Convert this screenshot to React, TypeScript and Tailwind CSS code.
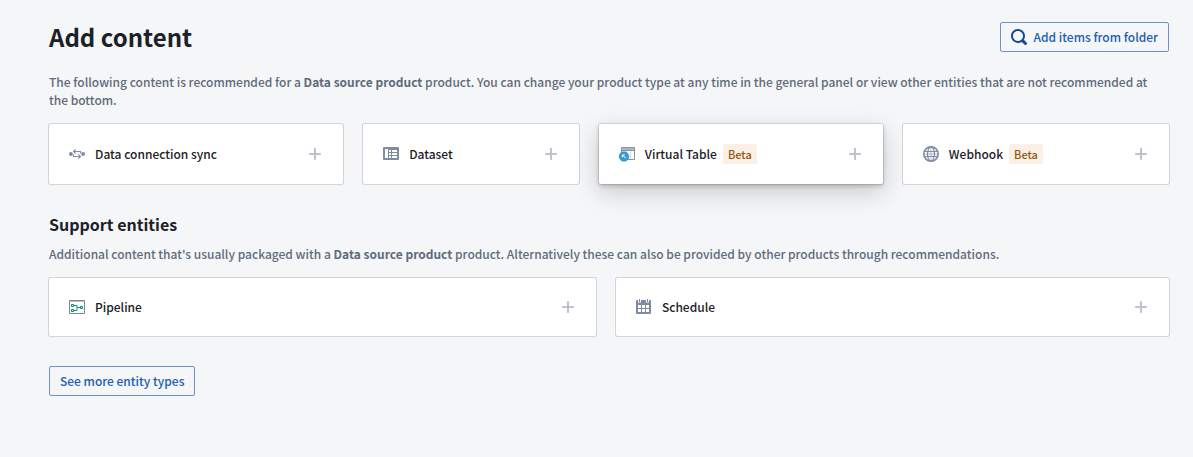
import type { ReactNode } from "react"

type Entity = {
  name: string
  icon: ReactNode
  beta?: boolean
  raised?: boolean
}

function SearchIcon() {
  return (
    <svg className="size-4 shrink-0" viewBox="0 0 16 16" fill="#184a90" aria-hidden="true">
      <path d="M15.55 13.43l-2.67-2.68a6.94 6.94 0 001.11-3.76c0-3.87-3.13-7-7-7s-7 3.13-7 7 3.13 7 7 7c1.39 0 2.68-.42 3.76-1.11l2.68 2.67a1.498 1.498 0 102.12-2.12zm-8.56-1.44c-2.76 0-5-2.24-5-5s2.24-5 5-5 5 2.24 5 5-2.24 5-5 5z" />
    </svg>
  )
}

function PlusIcon() {
  return (
    <svg className="size-4 shrink-0" viewBox="0 0 16 16" fill="#bcc3cd" aria-hidden="true">
      <path d="M13 7H9V3c0-.55-.45-1-1-1s-1 .45-1 1v4H3c-.55 0-1 .45-1 1s.45 1 1 1h4v4c0 .55.45 1 1 1s1-.45 1-1V9h4c.55 0 1-.45 1-1s-.45-1-1-1z" />
    </svg>
  )
}

function SyncIcon() {
  return (
    <svg className="size-4 shrink-0" viewBox="0 0 16 16" fill="none" stroke="#8290a6" strokeWidth="1.2" aria-hidden="true">
      <circle cx="1.9" cy="8" r="1.9" fill="#7d8aa1" stroke="none" />
      <circle cx="14.1" cy="8" r="1.9" fill="#7d8aa1" stroke="none" />
      <path d="M11.5 7.5V5.5H4.5M6.7 3.4L4.5 5.5l2.2 2.1" />
      <path d="M4.5 8.5v2H11.5M9.3 8.4l2.2 2.1-2.2 2.1" />
    </svg>
  )
}

function DatasetIcon() {
  return (
    <svg className="size-4 shrink-0" viewBox="0 0 16 16" aria-hidden="true">
      <rect y="1" width="16" height="13" rx="1" fill="#7f8ba1" />
      <path d="M2 3h3v9H2zM6 4h2v2H6zM9 4h5v2H9zM6 7h2v2H6zM9 7h5v2H9zM6 10h2v2H6zM9 10h5v2H9z" fill="#fff" />
    </svg>
  )
}

function VirtualTableIcon() {
  return (
    <svg className="size-4 shrink-0 overflow-visible" viewBox="0 0 16 16" fill="none" aria-hidden="true">
      <path d="M2.5 1.5h13v12h-13z" fill="#fff" stroke="#8b8f96" />
      <path d="M3 2h12v3H3z" fill="#a9b6c6" />
      <path d="M3 4.5h12" stroke="#8796a8" />
      <path d="M7.5 5v8M11.5 5v8" stroke="#d3dae3" />
      <circle cx="5" cy="10.5" r="4.8" fill="#3a9bd8" stroke="#2383c2" strokeWidth=".6" />
      <path d="M3.4 11.2V8.9h2.3M3.5 9l3.2 3.2" stroke="#fff" />
    </svg>
  )
}

function GlobeIcon() {
  return (
    <svg className="size-4 shrink-0" viewBox="0 0 16 16" fill="none" stroke="#7f8ba1" aria-hidden="true">
      <circle cx="8" cy="8" r="7.2" strokeWidth="1.6" />
      <ellipse cx="8" cy="8" rx="3.5" ry="7.2" strokeWidth="1.2" />
      <path d="M1.5 5.5h13M1.5 10.5h13" />
      <path d="M8 1v14M1 8h14" strokeWidth=".6" />
    </svg>
  )
}

function PipelineIcon() {
  return (
    <svg className="size-4 shrink-0" viewBox="0 0 16 16" fill="none" aria-hidden="true">
      <path d="M.5 1.5h15v13H.5z" fill="#fff" stroke="#82878f" />
      <path d="M1 2h14v1H1z" fill="#b4c0ce" />
      <path d="M4.5 6.5h3.5v5H4.5M8 8.5h4" stroke="#0f9b83" />
      <path d="M2.5 5.5h2v2h-2zM2.5 10.5h2v2h-2zM11.5 7.5h2v2h-2z" fill="#fff" stroke="#078673" />
    </svg>
  )
}

function ScheduleIcon() {
  return (
    <svg className="size-4 shrink-0" viewBox="0 0 16 16" aria-hidden="true">
      <path d="M1 1h1v2.5h3V1h5v2.5h3V1h1a1 1 0 011 1v12a1 1 0 01-1 1H1a1 1 0 01-1-1V2a1 1 0 011-1z" fill="#7f8ba1" />
      <path d="M3 0h1v3H3zM11 0h1v3h-1z" fill="#7f8ba1" />
      <path d="M2 6h3v3H2zM6 6h3v3H6zM10 6h3v3h-3zM2 10h3v3H2zM6 10h3v3H6zM10 10h3v3h-3z" fill="#fff" />
    </svg>
  )
}

const recommended: Entity[] = [
  { name: "Data connection sync", icon: <SyncIcon /> },
  { name: "Dataset", icon: <DatasetIcon /> },
  { name: "Virtual Table", icon: <VirtualTableIcon />, beta: true, raised: true },
  { name: "Webhook", icon: <GlobeIcon />, beta: true },
]

const support: Entity[] = [
  { name: "Pipeline", icon: <PipelineIcon /> },
  { name: "Schedule", icon: <ScheduleIcon /> },
]

function EntityCard({ name, icon, beta, raised }: Entity) {
  const shadow = raised
    ? "shadow-[0_0_0_1px_rgba(17,20,24,0.1),0_2px_4px_rgba(17,20,24,0.2),0_8px_24px_rgba(17,20,24,0.2)]"
    : "shadow-[0_0_0_1px_rgba(17,20,24,0.15)]"

  return (
    <button type="button" className={`flex flex-auto items-center rounded-xs bg-white p-5 text-left text-[#1c2127] ${shadow}`}>
      {icon}
      <span className="ml-[10px] whitespace-nowrap">{name}</span>
      {beta && (
        <span className="ml-[6px] rounded-xs bg-[#faf0e6] px-[5px] text-[11px] leading-5 text-[#935610]">Beta</span>
      )}
      <span className="ml-auto pl-5">
        <PlusIcon />
      </span>
    </button>
  )
}

function OutlinedButton({ children }: { children: ReactNode }) {
  return (
    <button
      type="button"
      className="flex h-[30px] shrink-0 items-center gap-[7px] rounded-xs border border-[#6e92cd] px-[10px] text-[#215db0]"
    >
      {children}
    </button>
  )
}

export default function App() {
  return (
    <main className="min-h-screen bg-[#f5f6f8] pt-[22px] pr-6 pb-[60px] pl-[49px] font-['Noto_Sans_CJK_SC',sans-serif] text-xs leading-[18px] font-medium text-[#5f6b7c]">
      {/* Header */}
      <header className="flex items-start justify-between">
        <h1 className="text-2xl leading-[30px] font-bold text-[#1c2127]">Add content</h1>
        <OutlinedButton>
          <SearchIcon />
          Add items from folder
        </OutlinedButton>
      </header>

      <p className="mt-[21px]">
        The following content is recommended for a <strong>Data source product</strong> product. You can change your
        product type at any time in the general panel or view other entities that are not recommended at the bottom.
      </p>
      <div className="mt-[15px] flex flex-wrap gap-5">
        {recommended.map((entity) => (
          <EntityCard key={entity.name} {...entity} />
        ))}
      </div>

      {/* Support entities */}
      <h2 className="mt-[29px] text-base leading-[22px] font-bold text-[#1c2127]">Support entities</h2>
      <p className="mt-[10px]">
        Additional content that's usually packaged with a <strong>Data source product</strong> product. Alternatively
        these can also be provided by other products through recommendations.
      </p>
      <div className="mt-[15px] mb-[30px] flex flex-wrap gap-5">
        {support.map((entity) => (
          <EntityCard key={entity.name} {...entity} />
        ))}
      </div>

      <OutlinedButton>See more entity types</OutlinedButton>
    </main>
  )
}
